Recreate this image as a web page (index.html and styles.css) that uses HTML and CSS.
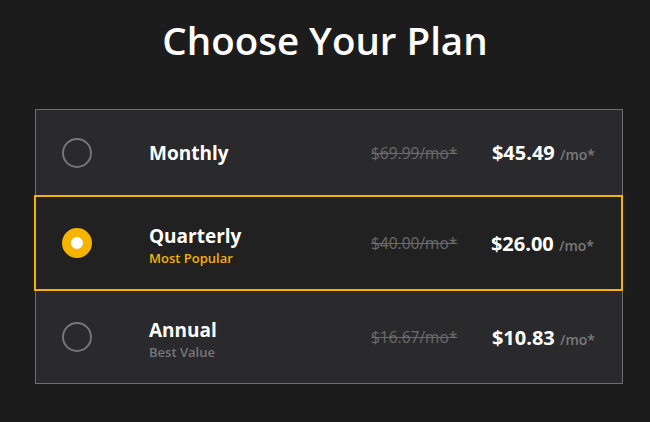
FILE: index.html
```html
<!DOCTYPE html>
<html lang="en">

<head>
  <meta charset="UTF-8" />
  <meta name="viewport" content="width=device-width, initial-scale=1.0" />
  <title>Choose Your Plan</title>
  <link rel="stylesheet" href="styles.css">
</head>

<body>

  <h1 class="title">Choose Your Plan</h1>

  <!-- plan list -->
  <div class="plans">
    <div class="plan plan-monthly">
      <span class="radio"></span>
      <div class="plan-name">
        <div class="name">Monthly</div>
      </div>
      <div class="old-price">$69.99/mo*</div>
      <div class="price">$45.49 <span class="per">/mo*</span></div>
    </div>

    <div class="plan plan-quarterly selected">
      <span class="radio"></span>
      <div class="plan-name with-tag">
        <div class="name">Quarterly</div>
        <div class="tag">Most Popular</div>
      </div>
      <div class="old-price">$40.00/mo*</div>
      <div class="price">$26.00 <span class="per">/mo*</span></div>
    </div>

    <div class="plan plan-annual">
      <span class="radio"></span>
      <div class="plan-name with-tag">
        <div class="name">Annual</div>
        <div class="tag">Best Value</div>
      </div>
      <div class="old-price">$16.67/mo*</div>
      <div class="price">$10.83 <span class="per">/mo*</span></div>
    </div>
  </div>

</body>

</html>
```

FILE: styles.css
```css
* {
  box-sizing: border-box;
}
body {
  margin: 0;
  background-color: #1c1c1c;
  font-family: 'Open Sans', 'Lato', sans-serif;
  color: #fff;
}
.title {
  margin: 14px 0 43px;
  font-size: 38.5px;
  line-height: 52px;
  font-weight: 600;
  text-align: center;
}
.plans {
  width: 588px;
  margin-left: 35px;
  border: 1px solid #6e6e6e;
  background-color: #2a2a2d;
}
.plan {
  display: flex;
  align-items: center;
  padding: 0 27px 0 26px;
}
.plan-monthly {
  height: 85px;
}
.plan-quarterly {
  height: 96px;
}
.plan-annual {
  height: 92px;
}
.plan.selected {
  margin: 0 -1px 0 -2px;
  padding: 0 27px 0 26px;
  border: 2px solid #f4b400;
  background-color: #212121;
}
.radio {
  width: 30px;
  height: 30px;
  border: 2px solid #767676;
  border-radius: 50%;
  flex-shrink: 0;
  margin-right: 57px;
}
.selected .radio {
  border: 9px solid #f4b400;
  background-color: #fff;
}
.plan-name {
  width: 222px;
  display: flex;
  flex-direction: column;
}
.plan-name.with-tag {
  padding-top: 3px;
}
.name {
  font-size: 19px;
  font-weight: 700;
  line-height: 24px;
}
.tag {
  font-size: 13px;
  font-weight: 600;
  line-height: 16px;
  color: #777;
  margin-top: 2px;
}
.selected .tag {
  color: #f4b400;
}
.old-price {
  font-size: 15.5px;
  color: #6b6b6b;
  text-decoration: line-through;
}
.price {
  margin-left: auto;
  font-size: 20px;
  font-weight: 700;
}
.per {
  font-size: 14px;
  font-weight: 600;
  color: #7a7a7a;
}
```
